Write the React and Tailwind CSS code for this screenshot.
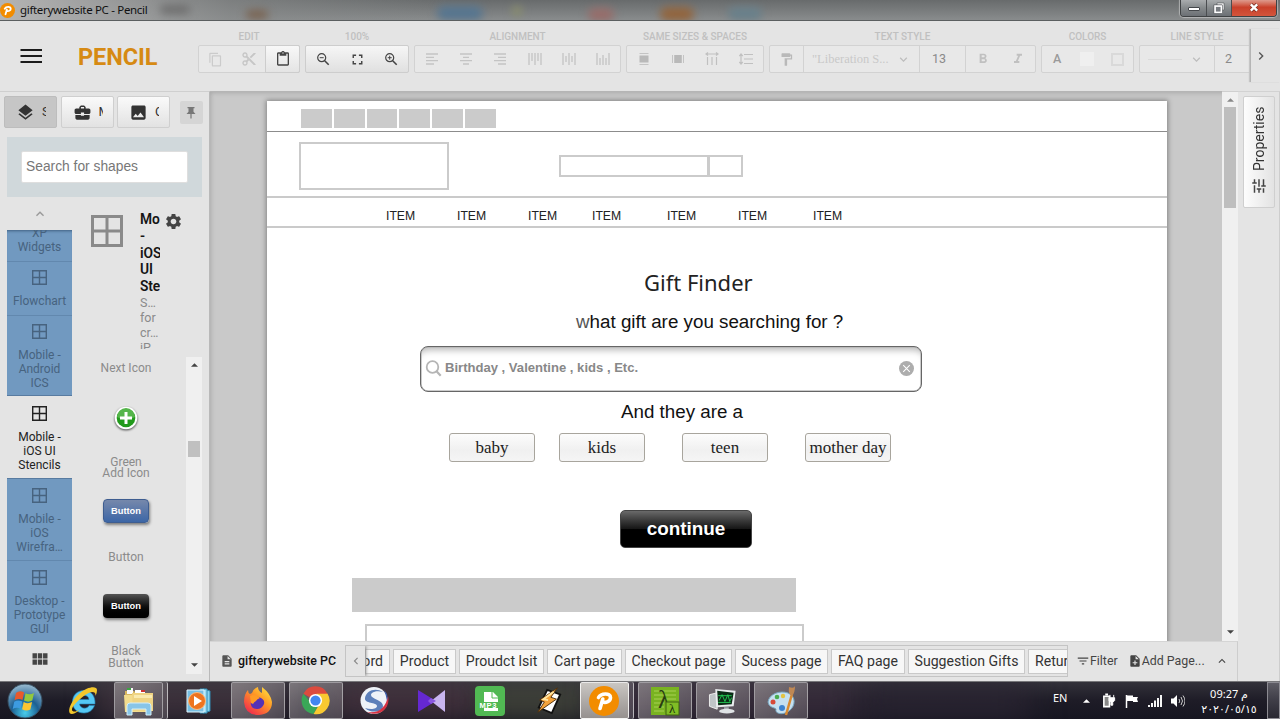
import React from "react";
import {
  MdContentCopy, MdContentCut, MdContentPaste, MdFullscreen,
  MdFormatPaint, MdExpandMore, MdExpandLess, MdFormatBold, MdFormatItalic, MdLayers,
  MdBusinessCenter, MdImage, MdSettings, MdDescription, MdNoteAdd, MdFilterList, MdTune,
  MdViewModule, MdChevronLeft, MdChevronRight,
} from "react-icons/md";

const roboto = "font-['Roboto','Liberation_Sans',sans-serif]";
const arial = "font-['Liberation_Sans',Arial,sans-serif]";

function PencilLogo({ className }) {
  return (
    <svg viewBox="0 0 30 30" className={className}>
      <circle cx="15" cy="15" r="15" fill="#f28c00" />
      <path d="M11 22.500 13.800 13M9.500 11.500C12 7 21.500 6.500 21.500 11.500c0 4-4.500 5.500-8 4.500" fill="none" stroke="#fff" strokeWidth="3.600" strokeLinecap="round" strokeLinejoin="round" />
    </svg>
  );
}

function TitleBar() {
  return (
    <header className="relative flex h-[21px] shrink-0 justify-between overflow-hidden border-b border-[#5b5f60] bg-linear-to-b from-[#686b6c] to-[#898c8d]">
      <div className="absolute inset-0 bg-linear-to-r from-[#b4b4b4] via-[#8a8c8c]/60 via-18% to-transparent to-35%" />
      <div className="absolute top-[6px] left-[437px] h-[14px] w-[46px] rounded-full bg-[#557590] blur-[4px]" />
      <div className="absolute top-[6px] left-[512px] h-[10px] w-[10px] rounded-full bg-[#8b8f6a] blur-[4px]" />
      <div className="absolute top-[8px] left-[588px] h-[13px] w-[26px] rounded-full bg-[#976c69] blur-[4px]" />
      <div className="absolute top-[7px] left-[660px] h-[14px] w-[34px] rounded-full bg-[#92643c] blur-[4px]" />
      <div className="absolute top-[7px] left-[728px] h-[13px] w-[34px] rounded-full bg-[#68808b] blur-[4px]" />
      <div className="absolute top-[10px] left-[246px] h-[9px] w-[22px] rounded-full bg-[#79624f] blur-[4px]" />
      <div className="absolute top-[5px] left-[160px] h-[9px] w-[30px] rounded-full bg-[#6d6d6d] blur-[4px]" />
      <div className="relative flex items-center gap-[5px]">
        <PencilLogo className="h-[15px] w-[15px]" />
        <span className="font-['Noto_Sans','Open_Sans',sans-serif] text-[11.5px] leading-[20px] tracking-[-0.33px] whitespace-nowrap text-[#111]">gifterywebsite PC - Pencil</span>
      </div>
      <div className="relative mr-[3px] flex h-[17px] overflow-hidden rounded-b-[4px] border border-t-0 border-[#3f4244] shadow-[0_0_1px_1px_rgba(215,215,215,0.6)]">
        <div className="flex w-[26px] justify-center border-r border-[#4a4d50] bg-linear-to-b from-[#a9acae] via-[#85898b] to-[#6c7075] pt-[7px]">
          <div className="h-[4px] w-[12px] rounded-[1px] border border-[#44474b] bg-white" />
        </div>
        <div className="flex w-[25px] justify-center border-r border-[#4a4d50] bg-linear-to-b from-[#a9acae] via-[#85898b] to-[#6c7075] pt-[2px]">
          <svg viewBox="0 0 12 12" className="h-[12px] w-[12px]">
            <path d="M4 1h7v7H9V3H4z" fill="#fff" stroke="#4b4e52" strokeWidth=".6" />
            <rect x="2" y="4" width="6.500" height="6.500" fill="#777b80" stroke="#fff" strokeWidth="1.800" />
            <rect x=".9" y="2.900" width="8.700" height="8.700" fill="none" stroke="#4b4e52" strokeWidth=".5" />
          </svg>
        </div>
        <div className="flex w-[44px] justify-center bg-linear-to-b from-[#dd9a8d] via-[#c9402a] via-45% to-[#d4553c] pt-[2px]">
          <svg viewBox="0 0 12 12" className="h-[11px] w-[12px]">
            <path d="M2.500 2.500l7 7M9.500 2.500l-7 7" stroke="#6a2a20" strokeWidth="4" />
            <path d="M2.500 2.500l7 7M9.500 2.500l-7 7" stroke="#fff" strokeWidth="2.600" />
          </svg>
        </div>
      </div>
    </header>
  );
}

function Group({ label, width, children, bright }) {
  return (
    <section className={`flex shrink-0 flex-col ${width}`}>
      <h2 className="h-[15px] text-center text-[10px] leading-[15px] font-medium whitespace-nowrap text-[#c0c0c0]">{label}</h2>
      <div className={`mt-px flex h-[28px] rounded-[2px] border ${bright ? "border-[#cdcdcd] bg-linear-to-b from-[#f6f6f6] to-[#e0e0e0]" : "border-[#d2d2d2] bg-[#e8e8e8]"}`}>{children}</div>
    </section>
  );
}

function Cell({ children, className = "" }) {
  return <div className={`flex flex-1 items-center justify-center ${className}`}>{children}</div>;
}

function Lens({ plus }) {
  return (
    <svg viewBox="0 0 14 14" className="h-[14px] w-[14px]" fill="none" stroke="#444">
      <circle cx="5.700" cy="5.700" r="4" strokeWidth="1.200" />
      <path d="M8.700 8.700l4 4" strokeWidth="1.600" />
      <path d={plus ? "M3.700 5.700h4M5.700 3.700v4" : "M3.700 5.700h4"} />
    </svg>
  );
}

const shapeIcons = [
  "M1 2h12M1 5.300h8M1 8.600h12M1 12h8",
  "M1 2h12M4 5.300h6M1 8.600h12M4 12h6",
  "M1 2h12M5 5.300h8M1 8.600h12M5 12h8",
  "M1 1v12M4 1v8M7 1v12M10 1v8M13 1v12",
  "M1 1v12M4 4v6M7 1v12M10 4v6M13 1v12",
  "M1 1v12M4 6v7M7 3v10M10 6v7M13 1v12",
];

function Toolbar() {
  return (
    <div className="flex h-[70px] shrink-0 bg-[#e4e4e4] pt-[8px]">
      <div className="flex w-[198px] shrink-0 items-start">
        <svg viewBox="0 0 22 16" className="mt-[19px] ml-[20px] h-[16px] w-[22px]">
          <path d="M.5 2h21.500M.5 8h21.500M.5 14h21.500" stroke="#1b1b1b" strokeWidth="2.200" />
        </svg>
        <div className="mt-[12px] ml-[36px] text-[23.5px] leading-[32px] font-bold tracking-[-0.1px] text-[#d68a13]">PENCIL</div>
      </div>
      <div className="flex w-[1052px] shrink-0 gap-[5px] overflow-hidden">
        <Group label="EDIT" width="w-[102px]">
          <Cell><MdContentCopy className="h-[15px] w-[15px] text-[#cbcbcb]" /></Cell>
          <Cell><MdContentCut className="h-[16px] w-[16px] text-[#c6c6c6]" /></Cell>
          <Cell className="-my-px -mr-px rounded-r-[2px] border border-[#cdcdcd] bg-linear-to-b from-[#f8f8f8] to-[#e4e4e4]"><MdContentPaste className="h-[16px] w-[16px] text-[#444]" /></Cell>
        </Group>
        <Group label="100%" width="w-[104px]" bright>
          <Cell><Lens /></Cell>
          <Cell><MdFullscreen className="h-[17px] w-[17px] text-[#444]" /></Cell>
          <Cell><Lens plus /></Cell>
        </Group>
        <Group label="ALIGNMENT" width="w-[207px]">
          {shapeIcons.map((d) => (
            <Cell key={d}><svg viewBox="0 0 14 14" className="h-[14px] w-[14px]"><path d={d} stroke="#c4c4c4" strokeWidth="1.300" /></svg></Cell>
          ))}
        </Group>
        <Group label="SAME SIZES & SPACES" width="w-[138px]">
          <Cell><svg viewBox="0 0 14 14" className="h-[14px] w-[14px]"><path d="M2.500 1.500h9M2.500 12.500h9" stroke="#c4c4c4" /><path d="M2.500 3.500h9v7h-9z" fill="#b9b9b9" /></svg></Cell>
          <Cell><svg viewBox="0 0 14 14" className="h-[14px] w-[14px]"><path d="M1.500 3v8M12.500 3v8" stroke="#c4c4c4" /><path d="M3.200 3h7.600v8H3.200z" fill="#b9b9b9" /></svg></Cell>
          <Cell><svg viewBox="0 0 14 14" className="h-[14px] w-[14px]"><path d="M2.500 5v8M7 5v8M11.500 5v8M1 2h12M3 .5L1 2l2 1.500M11 .5L13 2l-2 1.500" stroke="#c0c0c0" strokeWidth="1.200" fill="none" /></svg></Cell>
          <Cell><svg viewBox="0 0 14 14" className="h-[14px] w-[14px]"><path d="M5 2.500h9M5 7h9M5 11.500h9M2 2v10M.3 4L2 2l1.700 2M.3 10L2 12l1.700-2" stroke="#c0c0c0" strokeWidth="1.200" fill="none" /></svg></Cell>
        </Group>
        <Group label="TEXT STYLE" width="w-[267px]">
          <div className="flex w-[34px] items-center justify-center border-r border-[#d2d2d2]"><MdFormatPaint className="h-[15px] w-[15px] text-[#b9b9b9]" /></div>
          <div className="flex w-[116px] items-center border-r border-[#d2d2d2] pl-[8px]">
            <span className="w-[84px] font-['Liberation_Serif',serif] text-[12.5px] whitespace-nowrap text-[#c8c8c8]">"Liberation S...</span>
            <MdExpandMore className="h-[15px] w-[15px] text-[#bdbdbd]" />
          </div>
          <div className="flex w-[46px] items-center border-r border-[#d2d2d2] pl-[12px] text-[12.5px] text-[#8a8a8a]">13</div>
          <Cell><MdFormatBold className="h-[16px] w-[16px] text-[#c0c0c0]" /></Cell>
          <Cell><MdFormatItalic className="h-[16px] w-[16px] text-[#c0c0c0]" /></Cell>
        </Group>
        <Group label="COLORS" width="w-[93px]">
          <Cell className="text-[12.5px] font-medium text-[#9a9a9a]">A</Cell>
          <Cell><div className="h-[14px] w-[14px] bg-[#efefef]" /></Cell>
          <Cell><div className="h-[13px] w-[13px] border-2 border-[#d9d9d9]" /></Cell>
        </Group>
        <Group label="LINE STYLE" width="w-[116px]">
          <div className="flex w-[75px] items-center border-r border-[#d2d2d2] pl-[8px]">
            <div className="mr-[7px] h-px w-[34px] bg-[#dadada]" />
            <MdExpandMore className="h-[15px] w-[15px] text-[#bdbdbd]" />
          </div>
          <div className="flex items-center pl-[10px] text-[12.5px] text-[#8a8a8a]">2</div>
        </Group>
      </div>
      <div className="flex h-[53px] w-[30px] items-center border-l border-[#b5b5b5] pl-[2px] shadow-[-1px_0_1px_#c5c5c5]"><MdChevronRight className="h-[16px] w-[16px] text-[#555]" /></div>
    </div>
  );
}

function GridIcon({ className }) {
  return (
    <svg viewBox="0 0 32 32" className={className}>
      <path d="M1.500 1.500h29v29h-29zM16 1.500v29M1.500 16h29" fill="none" stroke="currentColor" strokeWidth="3" />
    </svg>
  );
}

const collections = [
  { name: ["Flowchart"], box: "h-[54px] pt-[8px] bg-[#7199c0] border-t border-[#6288ae] text-[#47637f]" },
  { name: ["Mobile -", "Android", "ICS"], box: "h-[80px] pt-[8px] bg-[#7199c0] border-t border-[#6288ae] text-[#47637f]" },
  { name: ["Mobile -", "iOS UI", "Stencils"], box: "h-[83px] pt-[10px] bg-[#e4e4e4] border-t border-[#587ba0] text-[#222]" },
  { name: ["Mobile -", "iOS", "Wirefra…"], box: "h-[82px] pt-[9px] bg-[#7199c0] border-t border-[#587ba0] text-[#47637f]" },
  { name: ["Desktop -", "Prototype", "GUI"], box: "h-[81px] pt-[9px] bg-[#7199c0] border-t border-[#6288ae] text-[#47637f]" },
];

function SideTab({ children, letter, active }) {
  return (
    <button className={`flex h-[32px] w-[53px] items-center rounded-[2px] border pl-[11px] text-left ${active ? "border-[#bdbdbd] bg-[#c6c6c6]" : "border-[#cfcfcf] bg-linear-to-b from-[#fafafa] to-[#e2e2e2]"}`}>
      {children}
      <span className="ml-[7px] w-[4px] overflow-hidden text-[13px] leading-[16px] text-[#333]">{letter}</span>
    </button>
  );
}

function ShapeLabel({ children, className }) {
  return <div className={`text-center text-[12px] leading-[11.500px] text-[#8b8b8b] ${className}`}>{children}</div>;
}

function Sidebar() {
  return (
    <aside className="flex w-[210px] shrink-0 flex-col overflow-hidden border-t border-r border-t-[#cfcfcf] border-r-[#b9b9b9] bg-[#e4e4e4]">
      <div className="flex h-[45px] shrink-0 gap-[3.500px] pt-[4px] pl-[4px]">
        <SideTab letter="S" active><MdLayers className="h-[19px] w-[19px] shrink-0 text-[#333]" /></SideTab>
        <SideTab letter="M"><MdBusinessCenter className="h-[19px] w-[19px] shrink-0 text-[#333]" /></SideTab>
        <SideTab letter="C"><MdImage className="h-[19px] w-[19px] shrink-0 text-[#333]" /></SideTab>
        <button className="mt-[5px] ml-[6px] flex h-[23px] w-[23px] items-center justify-center rounded-[2px] bg-[#d5d5d5]">
          <svg viewBox="0 0 10 12" className="h-[12px] w-[10px]"><path d="M1.500 0h7v1.200h-1v3.600L9.500 7H5.600v4L5 12l-.6-1V7H.5l2-2.200V1.200h-1z" fill="#777" /></svg>
        </button>
      </div>
      <div className="ml-[7px] h-[60px] w-[195px] shrink-0 bg-[#d0d8db] px-[14px] pt-[14px]">
        <div className={`h-[32px] w-[167px] rounded-[2px] border border-[#dedede] bg-white pl-[4px] text-[13.800px] leading-[30px] text-[#777] ${arial}`}>Search for shapes</div>
      </div>
      <div className="flex min-h-0 flex-1">
        <div className="ml-[7px] flex w-[65px] shrink-0 flex-col">
          <div className="flex h-[33px] shrink-0 items-center justify-center text-[#999]"><MdExpandLess className="h-[16px] w-[16px]" /></div>
          <div className="flex h-[31px] shrink-0 flex-col justify-end overflow-hidden bg-[#7199c0] pb-[7px] text-center text-[12px] leading-[14px] text-[#47637f] shadow-[inset_0_3px_3px_-2px_#3e5f80]">
            <div>XP</div><div>Widgets</div>
          </div>
          {collections.map((c) => (
            <div key={c.name.join(" ")} className={`flex shrink-0 flex-col items-center text-[12px] leading-[14px] whitespace-nowrap ${c.box}`}>
              <GridIcon className="mb-[9px] h-[15px] w-[15px] shrink-0" />
              {c.name.map((n) => <div key={n}>{n}</div>)}
            </div>
          ))}
          <div className="flex flex-1 items-start justify-center pt-[8px]"><MdViewModule className="h-[20px] w-[20px] text-[#444]" /></div>
        </div>
        <div className="flex flex-1 flex-col">
          <div className="flex h-[160px] shrink-0 pl-[19px]">
            <GridIcon className="mt-[18px] h-[32px] w-[32px] text-[#8a8a8a]" />
            <div className="ml-[17px] h-[152px] w-[20px] overflow-hidden pt-[14px] whitespace-nowrap">
              <div className="text-[13.800px] leading-[16.800px] font-semibold tracking-[-0.1px] text-[#151515]">Mo<br />-<br />iOS<br />UI<br />Ste</div>
              <div className="text-[12.500px] leading-[15px] text-[#8a8a8a]">S…<br />for<br />cr…<br />iP</div>
            </div>
            <MdSettings className="mt-[15px] ml-[4px] h-[19px] w-[19px] text-[#444]" />
          </div>
          <div className="flex">
            <div className="flex h-[317px] w-[108px] shrink-0 flex-col items-center">
              <ShapeLabel className="mt-[6px]">Next Icon</ShapeLabel>
              <svg viewBox="0 0 28 28" className="mt-[29px] h-[28px] w-[28px] drop-shadow-[0_1px_1px_rgba(0,0,0,0.7)]">
                <circle cx="14" cy="14" r="11.300" fill="#fff" />
                <circle cx="14" cy="14" r="9.300" fill="#229a1c" />
                <path d="M5 13a9 9 0 0118 0 18 18 0 01-18 0z" fill="#55b54b" />
                <path d="M14 8v12M8 14h12" stroke="#fff" strokeWidth="3" />
              </svg>
              <ShapeLabel className="mt-[25px]">Green<br />Add Icon</ShapeLabel>
              <div className={`mt-[19px] h-[24px] w-[46px] rounded-[4px] border border-[#3e5d90] bg-linear-to-b from-[#7688ab] to-[#3c66a6] text-center text-[9.300px] leading-[22px] font-bold text-white shadow-[1px_2px_3px_rgba(0,0,0,0.45)] ${arial}`}>Button</div>
              <ShapeLabel className="mt-[29px]">Button</ShapeLabel>
              <div className={`mt-[31px] h-[24px] w-[46px] rounded-[4px] bg-linear-to-b from-[#555] via-[#111] via-50% to-black text-center text-[9.300px] leading-[24px] font-bold text-white shadow-[1px_2px_3px_rgba(0,0,0,0.45)] ${arial}`}>Button</div>
              <ShapeLabel className="mt-[28px]">Black<br />Button</ShapeLabel>
            </div>
            <div className="ml-[6px] flex h-[317px] w-[16px] flex-col items-center bg-[#f0f0f0]">
              <svg viewBox="0 0 8 4" className="mt-[6px] h-[4px] w-[7px]"><path d="M4 0l4 4H0z" fill="#444" /></svg>
              <div className="mt-[74px] h-[16px] w-[12px] bg-[#c0c0c0]" />
              <svg viewBox="0 0 8 4" className="mt-auto mb-[7px] h-[4px] w-[7px]"><path d="M0 0h8L4 4z" fill="#444" /></svg>
            </div>
          </div>
        </div>
      </div>
    </aside>
  );
}

const navItems = ["left-[119px]", "left-[190px]", "left-[261px]", "left-[325px]", "left-[400px]", "left-[471px]", "left-[546px]"];
const choices = [
  ["baby", "left-[182px]"], ["kids", "left-[292px]"], ["teen", "left-[415px]"], ["mother day", "left-[538px]"],
];

function Canvas() {
  return (
    <div className="flex-1 overflow-hidden border-t border-[#b5b5b5] bg-[#c9c9c9] pt-[9px] pl-[57px] shadow-[inset_3px_3px_4px_-2px_#aaa]">
      <div className={`relative h-[560px] w-[900px] bg-white shadow-[0_0_5px_1px_rgba(0,0,0,0.35)] ${arial}`}>
        <div className="absolute top-[8px] left-[34px] flex gap-[2px]">
          {[0, 1, 2, 3, 4, 5].map((i) => <div key={i} className="h-[19px] w-[30.800px] bg-[#cbcbcb]" />)}
        </div>
        <div className="absolute top-[30px] left-0 h-px w-full bg-[#8c8c8c]" />
        <div className="absolute top-[41px] left-[32px] h-[48px] w-[150px] border-2 border-[#cbcbcb]" />
        <div className="absolute top-[54px] left-[292px] h-[22px] w-[150px] border-2 border-[#cbcbcb]" />
        <div className="absolute top-[54px] left-[441px] h-[22px] w-[35px] border-2 border-[#cbcbcb]" />
        <div className="absolute top-[95px] left-0 h-[2px] w-full bg-[#cacaca]" />
        <div className="absolute top-[125px] left-0 h-[2px] w-full bg-[#cacaca]" />
        {navItems.map((pos) => <div key={pos} className={`absolute top-[108px] text-[12.200px] leading-[15px] text-[#222] ${pos}`}>ITEM</div>)}
        <div className="absolute top-[166px] left-[377px] font-['Noto_Sans','Open_Sans',sans-serif] text-[22px] leading-[30px] whitespace-nowrap text-[#222]">Gift Finder</div>
        <div className="absolute top-[209px] left-[309px] text-[18.800px] leading-[24px] whitespace-nowrap text-[#111]"><span className="text-[#555]">w</span>hat gift are you searching for ?</div>
        <div className="absolute top-[245px] left-[153px] flex h-[46px] w-[502px] items-start rounded-[8px] border border-[#666] bg-white shadow-[inset_0_9px_7px_-6px_#b5b5b5,inset_0_0_0_0.5px_#999]">
          <svg viewBox="0 0 18 18" className="mt-[13px] ml-[4px] h-[18px] w-[18px]"><circle cx="7.500" cy="7" r="5.800" fill="none" stroke="#b5b5b5" strokeWidth="1.800" /><path d="M11.500 11.300l4.200 4.500" stroke="#b5b5b5" strokeWidth="2.200" /></svg>
          <span className="mt-[12px] ml-[2px] text-[13.070px] leading-[18px] font-bold whitespace-nowrap text-[#888]">Birthday , Valentine , kids , Etc.</span>
          <svg viewBox="0 0 16 16" className="mt-[14px] mr-[7px] ml-auto h-[15px] w-[15px]"><circle cx="8" cy="8" r="8" fill="#adadad" /><path d="M4.500 4.500l7 7M11.500 4.500l-7 7" stroke="#fff" strokeWidth="1.100" /></svg>
        </div>
        <div className="absolute top-[299px] left-[354px] text-[18.750px] leading-[24px] whitespace-nowrap text-[#111]">And they are a</div>
        {choices.map(([text, pos]) => (
          <div key={text} className={`absolute top-[332px] h-[29px] w-[86px] rounded-[3px] border border-[#a8a59d] bg-linear-to-b from-[#fcfcfc] via-[#f0f0f0] via-60% to-[#f5f5f5] text-center font-['Liberation_Serif',serif] text-[17px] leading-[28px] whitespace-nowrap text-[#222] ${pos}`}>{text}</div>
        ))}
        <div className="absolute top-[409px] left-[353px] h-[38px] w-[132px] rounded-[5px] border border-[#444] bg-linear-to-b from-[#6a6a6a] via-[#151515] via-50% to-black to-52% text-center text-[18.900px] leading-[36px] font-bold text-white">continue</div>
        <div className="absolute top-[477px] left-[85px] h-[34px] w-[444px] bg-[#cbcbcb]" />
        <div className="absolute top-[523px] left-[98px] h-[60px] w-[439px] border-2 border-[#cbcbcb]" />
      </div>
    </div>
  );
}

const pages = [
  ["Product", "w-[63px]"], ["Proudct lsit", "w-[85px]"], ["Cart page", "w-[75px]"], ["Checkout page", "w-[107px]"],
  ["Sucess page", "w-[93px]"], ["FAQ page", "w-[74px]"], ["Suggestion Gifts", "w-[117px]"],
];

function PageBar() {
  return (
    <div className="flex h-[40px] shrink-0 border-t border-r border-t-[#d5d5d5] border-r-[#cdcdcd] bg-[#e4e4e4] pt-[3px] text-[#333]">
      <div className="flex h-[32px] w-[135px] shrink-0 items-center">
        <MdDescription className="ml-[10px] h-[14px] w-[14px] text-[#555]" />
        <span className="ml-[4px] text-[12.400px] font-medium whitespace-nowrap text-[#111]">gifterywebsite PC</span>
      </div>
      <div className="flex h-[32px] w-[723px] shrink-0 overflow-hidden border border-[#c4c4c4]">
        <div className="z-10 flex w-[19px] shrink-0 items-center justify-center bg-[#e4e4e4] shadow-[1px_0_3px_#888]"><MdChevronLeft className="h-[14px] w-[14px] text-[#888]" /></div>
        <div className="flex min-w-0 flex-1 items-center gap-[3px] text-[14.100px] whitespace-nowrap">
          <div className="flex h-[25px] w-[25px] shrink-0 justify-end overflow-hidden border border-[#c9c9c9] bg-[#f7f7f7] pr-[6px] leading-[23px]">Record</div>
          {pages.map(([name, width]) => <div key={name} className={`h-[25px] shrink-0 border border-[#c9c9c9] bg-[#f7f7f7] text-center leading-[23px] ${width}`}>{name}</div>)}
          <div className="h-[25px] w-[60px] shrink-0 border border-[#c9c9c9] bg-[#f7f7f7] pl-[6px] leading-[23px]">Return</div>
        </div>
      </div>
      <div className="flex h-[32px] items-center text-[12.400px] whitespace-nowrap text-[#444]">
        <MdFilterList className="ml-[8px] h-[14px] w-[14px]" /><span>Filter</span>
        <MdNoteAdd className="ml-[10px] h-[14px] w-[14px]" /><span>Add Page...</span>
        <MdExpandLess className="ml-[10px] h-[14px] w-[14px]" />
      </div>
    </div>
  );
}

function VerticalScroll() {
  return (
    <div className="flex w-[16px] shrink-0 flex-col items-center border-t border-[#cfcfcf] bg-[#f0f0f0]">
      <svg viewBox="0 0 8 4" className="mt-[6px] h-[4px] w-[7px]"><path d="M4 0l4 4H0z" fill="#888" /></svg>
      <div className="mt-[5px] h-[101px] w-[12px] bg-[#bebebe]" />
      <svg viewBox="0 0 8 4" className="mt-auto mb-[7px] h-[4px] w-[7px]"><path d="M0 0h8L4 4z" fill="#444" /></svg>
    </div>
  );
}

function Properties() {
  return (
    <aside className="w-[42px] shrink-0 border-t border-r border-t-[#d2d2d2] border-r-[#cdcdcd] bg-[#e4e4e4] pt-[4px] pl-[5px]">
      <div className="flex h-[112px] w-[32px] flex-col items-center rounded-[2px] border border-[#cfcfcf] bg-linear-to-r from-[#fdfdfd] to-[#e3e3e3] pt-[10px]">
        <div className="h-[64px] rotate-180 text-[14px] leading-[16px] whitespace-nowrap text-[#333] [writing-mode:vertical-rl]">Properties</div>
        <MdTune className="mt-[6px] h-[18px] w-[18px] -rotate-90 text-[#444]" />
      </div>
    </aside>
  );
}

function Task({ children, open, active, stacked }) {
  return (
    <div className="flex h-[37px] w-[54.200px] shrink-0">
      <div className={`flex h-[37px] flex-1 items-center justify-center ${active ? "rounded-[2px] border border-white/80 bg-linear-to-b from-[#c9c6c2] to-[#96918f]" : open ? "rounded-[2px] border border-[#b0aeb2]/80 bg-linear-to-br from-[#aaa4a6]/60 to-[#68616a]/60" : ""}`}>{children}</div>
      {stacked && <div className="h-[37px] w-[5px] rounded-r-[2px] border-r border-white/60 bg-white/15" />}
    </div>
  );
}

function Explorer() {
  return (
    <svg viewBox="0 0 34 30" className="h-[30px] w-[34px]">
      <path d="M3 5h9l2 2h14v18H3z" fill="#d9b75f" />
      <path d="M5 2h6v6H5z" fill="#fafafa" /><path d="M5 2h4v2H5z" fill="#3da344" />
      <path d="M13 4h10v4H13z" fill="#fff" /><path d="M19 4h4v2h-4z" fill="#c33" />
      <path d="M2 9h28l-1 17H3z" fill="#f3dc8d" /><path d="M10 7h21v18H11z" fill="#efd484" /><path d="M12 9h18v3H12z" fill="#f9eab0" />
      <path d="M5 29v-9q0-3 3-3h18q3 0 3 3v9h-5v-6H10v6z" fill="#88c5e8" stroke="#d3eef9" />
    </svg>
  );
}

function Taskbar() {
  return (
    <footer className="relative flex h-[38px] shrink-0 overflow-hidden border-t border-[#77777a] bg-linear-to-b from-[#33323a] via-[#1e1c27] to-[#171621]">
      <div className="absolute inset-y-0 left-[95px] w-[190px] bg-[#59464f]/55 blur-[14px]" />
      <div className="absolute inset-y-0 left-[330px] w-[150px] bg-[#5b414d]/60 blur-[14px]" />
      <div className="absolute inset-y-0 left-[480px] w-[110px] bg-[#4b5040]/70 blur-[12px]" />
      <div className="absolute inset-y-0 left-[600px] w-[260px] bg-[#463546]/70 blur-[16px]" />
      <div className="absolute inset-y-0 left-[860px] w-[170px] bg-[#2d2735]/80 blur-[16px]" />
      <div className="relative flex w-[56px] shrink-0 items-center pl-[7px]">
        <svg viewBox="0 0 36 36" className="h-[36px] w-[36px]">
          <defs><radialGradient id="orb" cx=".5" cy=".85" r=".9"><stop offset="0" stopColor="#48cdec" /><stop offset=".45" stopColor="#1c5f92" /><stop offset="1" stopColor="#a9c6d8" /></radialGradient></defs>
          <circle cx="18" cy="18" r="17" fill="url(#orb)" stroke="#364e60" />
          <path d="M9 10q4-3 8-.5l-1.500 7.500q-4-2-8 .3z" fill="#e9592b" />
          <path d="M18.500 10.200q4 2.300 8.500-.2l-1.700 7.500q-4 2.300-8.300 0z" fill="#93c83e" />
          <path d="M7.200 18.800q4-2.500 8-.2l-1.500 7.200q-4-2-8 .3z" fill="#3d9be0" />
          <path d="M16.700 19q4 2.300 8.400.1l-1.700 7.400q-4 2.200-8.300-.2z" fill="#fbc530" />
        </svg>
      </div>
      <div className="relative flex shrink-0 gap-[4px]">
        <Task>
          <svg viewBox="0 0 32 32" className="h-[32px] w-[32px]">
            <path d="M28 19H12.500c.5 5 8 5.500 9.500 1.500h5.500c-1.500 4.500-5.500 7.500-10.500 7.500C10 28 5.500 23.500 5.500 17S10 5.500 17 5.500 28.500 11 28 19zM12.500 14.500H22c-.5-5.500-8.500-5.500-9.500 0z" fill="#55c8f4" stroke="#2388be" strokeWidth=".6" />
            <path d="M5 29C-1 29 3 17 12 9S30 1 30 5c0 2-.5 4-1.500 6 .5-6-5.500-5-13 1S2 25 6.500 26.500c2 .3 4-.5 6-2-2 2.500-4.500 4.300-7.500 4.500z" fill="#f3c72c" />
          </svg>
        </Task>
        <Task open stacked><Explorer /></Task>
        <Task>
          <svg viewBox="0 0 28 26" className="h-[26px] w-[28px]">
            <path d="M18 1l7 2v20l-7 2z" fill="#8bd3ee" stroke="#318bb3" /><path d="M15 1h7v24h-7z" fill="#9bdcf1" stroke="#318bb3" /><path d="M2 2h17v22H2z" fill="#78bee2" stroke="#e1f6ff" />
            <circle cx="12" cy="13" r="8.500" fill="#ed741f" stroke="#f9bc82" /><path d="M9 8l8 5-8 5z" fill="#fff" />
          </svg>
        </Task>
        <Task open>
          <svg viewBox="0 0 30 30" className="h-[30px] w-[30px]">
            <defs><linearGradient id="fox" x1="1" y1="0" x2=".2" y2="1"><stop stopColor="#fff047" /><stop offset=".45" stopColor="#ff9925" /><stop offset="1" stopColor="#f0264f" /></linearGradient></defs>
            <path d="M5 4q0 3 2 4l2-1q2-5 6-6 0 4 4 6V1q9 7 10 15 0 12-13 13Q2 29 1 16q0-8 4-12z" fill="url(#fox)" />
            <path d="M10 12q3-3 8 0 4 2 3 6-2 5-7 5t-6-4q-1-4 2-7z" fill="#5532b5" /><path d="M7 10q5-3 10 2-3 1-4 3-2 1-3 3l-2-1z" fill="#ff9b25" />
          </svg>
        </Task>
        <Task open>
          <svg viewBox="0 0 30 30" className="h-[29px] w-[29px]">
            <path d="M15 15L2.500 8A14 14 0 0127.500 8z" fill="#dd4b3e" /><path d="M2.500 8A14 14 0 0013 29l6-11H11z" fill="#3aa757" /><path d="M27.500 8A14 14 0 0113 29l7-12-4-9z" fill="#f9c931" />
            <circle cx="15" cy="15" r="6.800" fill="#fff" /><circle cx="15" cy="15" r="5.300" fill="#4386ef" />
          </svg>
        </Task>
        <Task>
          <svg viewBox="0 0 30 32" className="h-[32px] w-[30px]">
            <circle cx="15" cy="15.500" r="13.500" fill="#eef2f8" />
            <path d="M6 13C7 6 16 2 24 7c-6-2-12 0-12 3 0 4 12 5 12 11 0 6-12 8-18 2 6 2 12 1 12-2 0-4-13-2-12-8z" fill="#5c7fba" />
            <path d="M29 11c3 12-9 22-21 16 12 2 19-5 21-16z" fill="#d63243" /><path d="M25 5q5 5 3 11-1-6-3-11z" fill="#3f5fae" />
          </svg>
        </Task>
        <Task><svg viewBox="0 0 30 24" className="h-[24px] w-[30px]"><path d="M1 1l18 11L1 23z" fill="#6528d2" /><path d="M28 1v22L14 12z" fill="#c9b5ef" /><path d="M14 9l5 3-5 3-3-3z" fill="#8b57e0" /></svg></Task>
        <Task>
          <svg viewBox="0 0 30 30" className="h-[30px] w-[30px]">
            <rect width="30" height="30" rx="4" fill="#51b953" /><path d="M9 6h9l5 5v5H9zM9 22h14v3H9z" fill="#fff" /><path d="M17 6v6h6" fill="none" stroke="#51b953" />
            <text x="4.500" y="21.500" fontSize="7.500" fontWeight="bold" fontFamily="Liberation Sans, sans-serif" fill="#fff" textLength="17">MP3</text>
          </svg>
        </Task>
        <Task>
          <svg viewBox="0 0 30 30" className="h-[28px] w-[30px]">
            <path d="M13 3l14 5-9 20-14-6z" fill="#fff" stroke="#111" strokeWidth="2" /><path d="M24 1L5 14l5 2-7 11 20-14-6-2z" fill="#f4a23a" stroke="#50300e" /><path d="M20 5L9 13l5 1" fill="none" stroke="#ffe5a0" strokeWidth="2" />
          </svg>
        </Task>
        <Task active stacked><PencilLogo className="h-[30px] w-[30px]" /></Task>
        <Task open>
          <svg viewBox="0 0 30 30" className="h-[30px] w-[30px]">
            <rect x="1" y="1" width="28" height="28" fill="#79b321" /><path d="M4 5h22M4 9h22M4 13h22M4 17h10M4 21h10M4 25h10" stroke="#a9d154" />
            <text x="8" y="22" fontSize="25" fontFamily="Liberation Serif, serif" fill="#293d12">λ</text><rect x="16" y="16" width="13" height="13" fill="#80bd25" stroke="#3f6310" /><text x="19" y="27" fontSize="13" fontFamily="Liberation Serif, serif" fill="#20320e">λ</text>
          </svg>
        </Task>
        <Task open>
          <svg viewBox="0 0 32 30" className="h-[29px] w-[32px]">
            <path d="M2 9l8-2v17l-8-3z" fill="#bfc4c7" stroke="#eee" /><path d="M8 3l21 2-2 16-18 1z" fill="#e9ecee" /><path d="M10 5l17 2-2 12-14 1z" fill="#0b2b16" />
            <path d="M12 15l3-6 3 7 3-7 2 7 2-4M11 10h14M11 17h13" stroke="#21c451" fill="none" /><path d="M17 22h5v3h-5z" fill="#a4aab0" /><ellipse cx="20" cy="26" rx="8" ry="2.500" fill="#e0e3e6" />
          </svg>
        </Task>
        <Task open>
          <svg viewBox="0 0 32 30" className="h-[30px] w-[32px]">
            <path d="M3 16C4 8 15 4 23 7s8 13 1 18-14 2-13-1-7-1-8-8z" fill="#c5e0f0" stroke="#79a7c1" />
            <circle cx="8" cy="16" r="2.500" fill="#d74938" /><circle cx="12" cy="11" r="2.300" fill="#4aac50" /><circle cx="18" cy="10" r="2.200" fill="#e3c342" /><circle cx="17" cy="22" r="3" fill="#3d83cf" />
            <path d="M27 8l-6 21" stroke="#d98a31" strokeWidth="2.500" /><path d="M24 1q5 2 6-1 0 7-3 10-4-1-3-9z" fill="#bf8854" />
          </svg>
        </Task>
      </div>
      <div className="relative ml-auto flex items-center text-white">
        <span className="mr-[16px] mb-[4px] font-['Noto_Sans',sans-serif] text-[11px] tracking-[-0.3px]">EN</span>
        <svg viewBox="0 0 8 4" className="mr-[12px] h-[4px] w-[7px]"><path d="M4 0l4 4H0z" fill="#fff" /></svg>
        <svg viewBox="0 0 14 16" className="mr-[9px] h-[15px] w-[14px]"><path d="M1.500 3.500h6v11h-6zM3 1.500h3" fill="#888" stroke="#fff" strokeWidth="1.700" /><path d="M7 5h6v3l-2 2v3H9v-3L7 8zM8 2v3M12 2v3" fill="#fff" stroke="#fff" /></svg>
        <svg viewBox="0 0 14 14" className="mr-[9px] h-[14px] w-[14px]"><path d="M1.500 1v13" stroke="#fff" strokeWidth="1.500" /><path d="M2 1.500h6v1.500h5l-1 2 1 3H8V7H2z" fill="#fff" /></svg>
        <svg viewBox="0 0 14 12" className="mr-[9px] h-[12px] w-[14px]"><path d="M0 12h2v-2H0zM3 12h2V8H3zM6 12h2V5.500H6zM9 12h2V3H9zM12 12h2V0h-2z" fill="#f5f5f5" /></svg>
        <svg viewBox="0 0 14 14" className="mr-[15px] h-[14px] w-[14px]"><path d="M0 4.500h2.500L6 1v12L2.500 9.500H0z" fill="#fff" /><path d="M8 5q1.500 2 0 4M10 3q3 4 0 8M12 1.500q4 5.500 0 11" fill="none" stroke="#ccc" /></svg>
        <div className="mr-[9px] w-[58px] text-center font-['Noto_Sans','DejaVu_Sans',sans-serif] text-[11px] leading-[15px] tracking-[-0.800px] whitespace-nowrap">
          <div>09:27 م</div>
          <div className="text-[11px] tracking-[-0.4px]">٢٠٢٠/٠٥/١٥</div>
        </div>
        <div className="h-[37px] w-[13px] border border-[#8c8b92] bg-linear-to-b from-[#7c7b83]/60 to-[#2a2933]" />
      </div>
    </footer>
  );
}

export default function App() {
  return (
    <div className={`flex h-[719px] w-[1280px] flex-col overflow-hidden bg-[#e4e4e4] ${roboto}`}>
      <TitleBar />
      <Toolbar />
      <main className="flex h-[590px] shrink-0">
        <Sidebar />
        <div className="flex w-[1028px] shrink-0 flex-col">
          <div className="flex h-[550px] shrink-0">
            <Canvas />
            <VerticalScroll />
          </div>
          <PageBar />
        </div>
        <Properties />
      </main>
      <Taskbar />
    </div>
  );
}
